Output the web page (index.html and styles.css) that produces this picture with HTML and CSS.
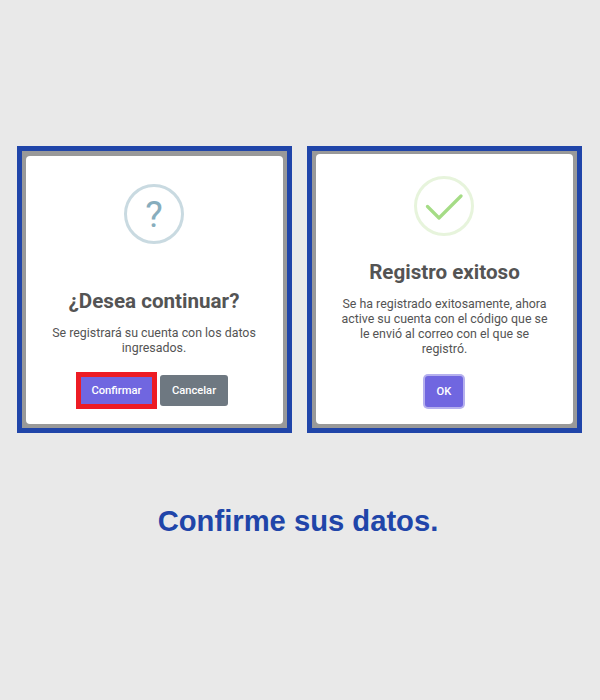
FILE: index.html
```html
<!DOCTYPE html>
<html lang="es">
<head>
  <meta charset="UTF-8" />
  <title>Confirme sus datos</title>
  <link rel="stylesheet" href="styles.css">
</head>
<body>

<div class="dialogs">
  <div class="frame">
    <div class="card card-confirm">
      <div class="icon icon-question">?</div>
      <h2>¿Desea continuar?</h2>
      <p>Se registrará su cuenta con los datos<br>ingresados.</p>
      <div class="actions">
        <div class="highlight"><button class="btn btn-primary">Confirmar</button></div>
        <button class="btn btn-cancel">Cancelar</button>
      </div>
    </div>
  </div>

  <div class="frame">
    <div class="card card-success">
      <div class="icon icon-success">
        <svg width="38" height="28" viewBox="0 0 38 28">
          <path d="M2.5 14.5 L14 26 L36 4" fill="none" stroke="#a5dc86" stroke-width="3.2" stroke-linecap="round" stroke-linejoin="round"/>
        </svg>
      </div>
      <h2>Registro exitoso</h2>
      <p>Se ha registrado exitosamente, ahora<br>active su cuenta con el código que se<br>le envió al correo con el que se<br>registró.</p>
      <div class="actions">
        <button class="btn btn-primary btn-focus">OK</button>
      </div>
    </div>
  </div>
</div>

<h1 class="caption">Confirme sus datos.</h1>

</body>
</html>
```

FILE: styles.css
```css
body {
  margin: 0;
  background-color: #e9e9e9;
  font-family: Roboto, sans-serif;
}

.dialogs {
  display: flex;
  justify-content: center;
  gap: 15px;
  padding-top: 146px;
  padding-right: 1px;
}

.frame {
  box-sizing: border-box;
  width: 275px;
  height: 287px;
  border: 5px solid #2045a9;
  background-color: #999;
  padding: 5px 4px 4px;
}

.card {
  box-sizing: border-box;
  height: 100%;
  background: white;
  border-radius: 4px;
  text-align: center;
  color: #545454;
}

.card-confirm {
  padding-top: 28px;
  padding-right: 1px;
}

.card-success {
  margin-top: -2px;
  height: calc(100% + 2px);
  padding-top: 22px;
}

.icon {
  box-sizing: border-box;
  width: 60px;
  height: 60px;
  margin-left: 98px;
  border-radius: 50%;
  border: 3px solid;
  display: flex;
  align-items: center;
  justify-content: center;
}

.icon-question {
  border-color: #c9dae1;
  color: #87adbd;
  font-size: 37px;
}

.icon-success {
  border-color: #e7f4dc;
}

h2 {
  margin: 0;
  font-size: 20.6px;
  line-height: 24px;
  font-weight: 700;
}

.card-confirm h2 {
  margin-top: 45px;
}

.card-success h2 {
  margin-top: 24px;
}

p {
  margin: 12px 0 0;
  font-size: 12.4px;
  line-height: 15px;
}

.actions {
  display: flex;
  justify-content: center;
  align-items: center;
  gap: 3px;
}

.card-confirm .actions {
  margin-top: 17px;
  margin-right: 4px;
}

.card-success .actions {
  margin-top: 18px;
  margin-right: 1px;
}

.btn {
  box-sizing: border-box;
  border: none;
  border-radius: 3px;
  padding: 0;
  color: white;
  font-family: Roboto, sans-serif;
  font-size: 11.2px;
  font-weight: 500;
}

.btn-primary {
  display: block;
  width: 71px;
  height: 27px;
  background-color: #7066e0;
  border-radius: 0;
}

.highlight {
  border: 5px solid #ed1c24;
}

.btn-cancel {
  width: 68px;
  height: 31px;
  background-color: #6e7881;
}

.btn-focus {
  width: 38px;
  height: 31px;
  margin: 2px;
  border-radius: 3px;
  box-shadow: 0 0 0 2px #b5b0ee;
}

.caption {
  margin: 72px 4px 0 0;
  text-align: center;
  color: #2045a9;
  font-family: "Liberation Sans", Arial, sans-serif;
  font-size: 29.2px;
  line-height: 33px;
  font-weight: 700;
}
```
